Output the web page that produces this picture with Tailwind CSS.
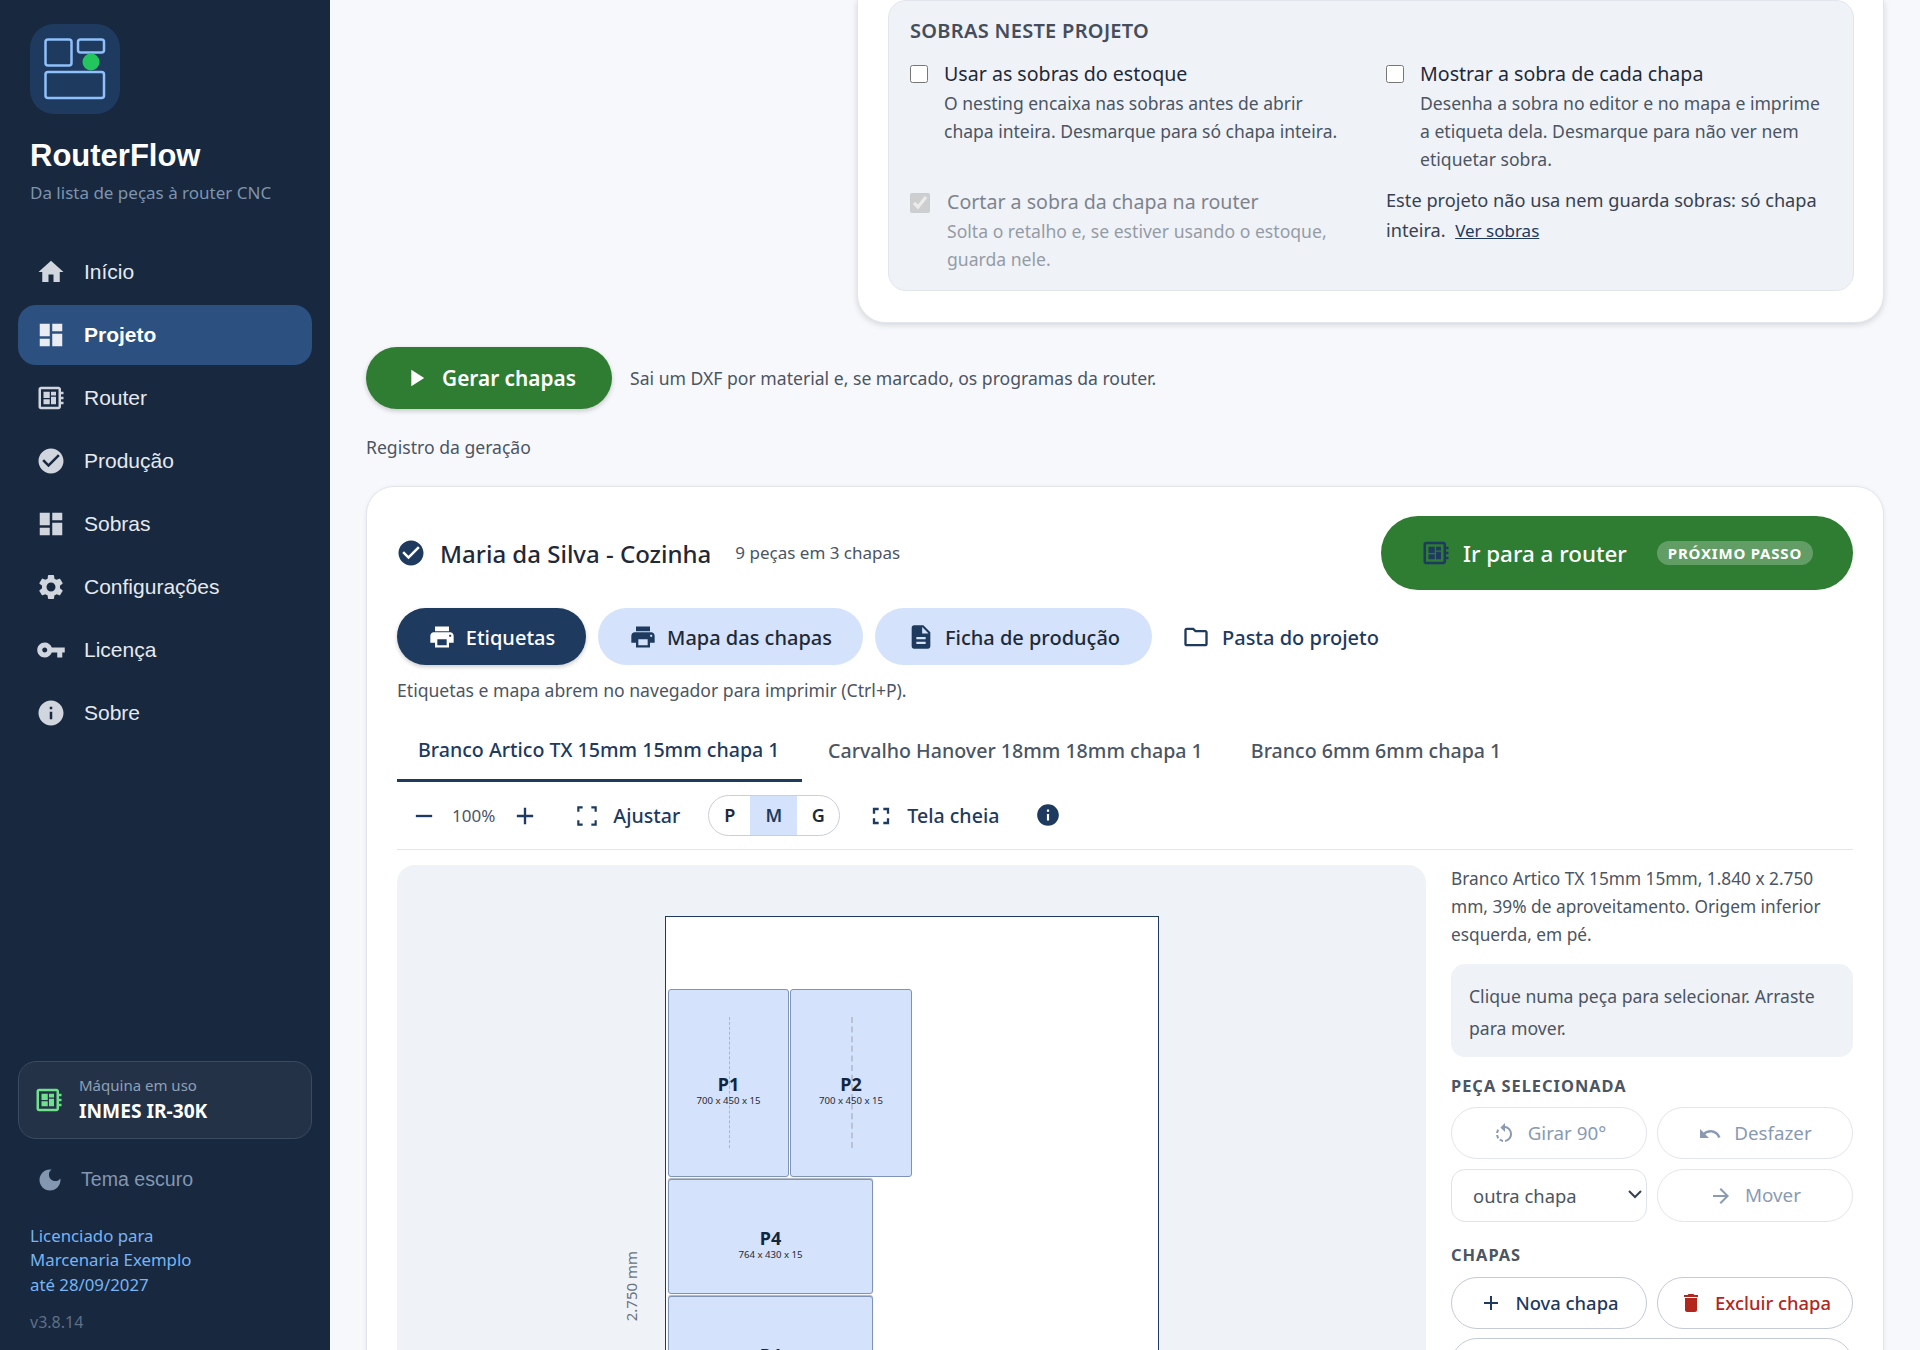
<!DOCTYPE html>
<html lang="pt-BR">
<head>
<meta charset="utf-8">
<title>RouterFlow</title>
<script src="https://cdn.jsdelivr.net/npm/@tailwindcss/browser@4"></script>
</head>
<body class="m-0 bg-[#f7f8fc]">
<div class="flex w-[1920px] h-[1350px] overflow-hidden font-['Noto_Sans',sans-serif] text-[#1f2937]">
  <aside class="w-[330px] shrink-0 h-full bg-[#17283f] flex flex-col">
    <div class="ml-[30px] mt-[24px] w-[90px] h-[90px] rounded-[24px] bg-[#1e3a5f] flex items-center justify-center">
      <svg width="62" height="62" viewBox="0 0 62 62" fill="none" stroke="#8fc0fa" stroke-width="2.5">
        <rect x="1.5" y="1.5" width="26" height="26" rx="2.5"/>
        <rect x="34" y="1.5" width="26" height="13" rx="2.5"/>
        <rect x="1.5" y="34" width="58.5" height="26" rx="2.5"/>
        <circle cx="47" cy="24" r="8.5" fill="#22c55e" stroke="none"/>
      </svg>
    </div>
    <div class="ml-[30px] mt-[24px] h-[36px] leading-[36px] text-[31px] font-bold font-['Liberation_Sans',sans-serif] text-white">RouterFlow</div>
    <div class="ml-[30px] mt-[7px] h-[24px] leading-[24px] text-[17px] text-[#7f93ad]">Da lista de peças à router CNC</div>
    <nav class="mt-[37px] mx-[18px] flex flex-col gap-[3px] font-['Liberation_Sans',sans-serif] text-[21px] text-[#e5e9f0]">
      <a class="h-[60px] flex items-center pl-[18px] gap-[18px]"><svg class="w-[30px] h-[30px]" viewBox="0 0 24 24" fill="#d1d5de"><path d="M10 20v-6h4v6h5v-8h3L12 3 2 12h3v8z"/></svg>Início</a>
      <a class="h-[60px] flex items-center pl-[18px] gap-[18px] rounded-[18px] bg-[#2c5080] font-bold text-white"><svg class="w-[30px] h-[30px]" viewBox="0 0 24 24" fill="#e9ecf2"><path d="M3 13h8V3H3v10zm0 8h8v-6H3v6zm10 0h8V11h-8v10zm0-18v6h8V3h-8z"/></svg>Projeto</a>
      <a class="h-[60px] flex items-center pl-[18px] gap-[18px]"><svg class="w-[30px] h-[30px]" viewBox="0 0 24 24" fill="#d1d5de"><path d="M22 9V7h-2V5c0-1.1-.9-2-2-2H4c-1.1 0-2 .9-2 2v14c0 1.1.9 2 2 2h14c1.1 0 2-.9 2-2v-2h2v-2h-2v-2h2v-2h-2V9h2zm-4 10H4V5h14v14zM6 13h5v4H6zm6-6h4v3h-4zM6 7h5v5H6zm6 4h4v6h-4z"/></svg>Router</a>
      <a class="h-[60px] flex items-center pl-[18px] gap-[18px]"><svg class="w-[30px] h-[30px]" viewBox="0 0 24 24" fill="#d1d5de"><path d="M12 2C6.48 2 2 6.48 2 12s4.48 10 10 10 10-4.48 10-10S17.52 2 12 2zm-2 15l-5-5 1.41-1.41L10 14.17l7.59-7.59L19 8l-9 9z"/></svg>Produção</a>
      <a class="h-[60px] flex items-center pl-[18px] gap-[18px]"><svg class="w-[30px] h-[30px]" viewBox="0 0 24 24" fill="#d1d5de"><path d="M3 13h8V3H3v10zm0 8h8v-6H3v6zm10 0h8V11h-8v10zm0-18v6h8V3h-8z"/></svg>Sobras</a>
      <a class="h-[60px] flex items-center pl-[18px] gap-[18px]"><svg class="w-[30px] h-[30px]" viewBox="0 0 24 24" fill="#d1d5de"><path d="M19.14 12.94c.04-.3.06-.61.06-.94 0-.32-.02-.64-.07-.94l2.03-1.58c.18-.14.23-.41.12-.61l-1.92-3.32c-.12-.22-.37-.29-.59-.22l-2.39.96c-.5-.38-1.03-.7-1.62-.94l-.36-2.54c-.04-.24-.24-.41-.48-.41h-3.84c-.24 0-.43.17-.47.41l-.36 2.54c-.59.24-1.13.57-1.62.94l-2.39-.96c-.22-.08-.47 0-.59.22L2.74 8.87c-.12.21-.08.47.12.61l2.03 1.58c-.05.3-.09.63-.09.94s.02.64.07.94l-2.03 1.58c-.18.14-.23.41-.12.61l1.92 3.32c.12.22.37.29.59.22l2.39-.96c.5.38 1.03.7 1.62.94l.36 2.54c.05.24.24.41.48.41h3.84c.24 0 .44-.17.47-.41l.36-2.54c.59-.24 1.13-.56 1.62-.94l2.39.96c.22.08.47 0 .59-.22l1.92-3.32c.12-.22.07-.47-.12-.61l-2.01-1.58zM12 15.6c-1.98 0-3.6-1.62-3.6-3.6s1.62-3.6 3.6-3.6 3.6 1.62 3.6 3.6-1.62 3.6-3.6 3.6z"/></svg>Configurações</a>
      <a class="h-[60px] flex items-center pl-[18px] gap-[18px]"><svg class="w-[30px] h-[30px]" viewBox="0 0 24 24" fill="#d1d5de"><path d="M12.65 10C11.83 7.67 9.61 6 7 6c-3.31 0-6 2.69-6 6s2.69 6 6 6c2.61 0 4.83-1.67 5.65-4H17v4h4v-4h2v-4H12.65zM7 14c-1.1 0-2-.9-2-2s.9-2 2-2 2 .9 2 2-.9 2-2 2z"/></svg>Licença</a>
      <a class="h-[60px] flex items-center pl-[18px] gap-[18px]"><svg class="w-[30px] h-[30px]" viewBox="0 0 24 24" fill="#d1d5de"><path d="M12 2C6.48 2 2 6.48 2 12s4.48 10 10 10 10-4.48 10-10S17.52 2 12 2zm1 15h-2v-6h2v6zm0-8h-2V7h2v2z"/></svg>Sobre</a>
    </nav>
    <div class="mt-auto mx-[18px] h-[78px] rounded-[18px] border border-[#3a4a60] bg-[#233247] flex items-center pl-[15px] gap-[15px]">
      <svg class="w-[30px] h-[30px]" viewBox="0 0 24 24" fill="#6ee18a"><path d="M22 9V7h-2V5c0-1.1-.9-2-2-2H4c-1.1 0-2 .9-2 2v14c0 1.1.9 2 2 2h14c1.1 0 2-.9 2-2v-2h2v-2h-2v-2h2v-2h-2V9h2zm-4 10H4V5h14v14zM6 13h5v4H6zm6-6h4v3h-4zM6 7h5v5H6zm6 4h4v6h-4z"/></svg>
      <div class="flex flex-col">
        <span class="text-[15px] leading-[21px] text-[#8fa0b6]">Máquina em uso</span>
        <span class="text-[19.2px] leading-[29px] font-bold text-white">INMES IR-30K</span>
      </div>
    </div>
    <div class="mt-[17px] h-[48px] flex items-center pl-[36px] gap-[17px] font-['Liberation_Sans',sans-serif] text-[19.6px] text-[#8497b0]">
      <svg class="w-[28px] h-[28px]" viewBox="0 0 24 24" fill="#8497b0"><path d="M12 3c-4.97 0-9 4.03-9 9s4.03 9 9 9 9-4.03 9-9c0-.46-.04-.92-.1-1.36-.98 1.37-2.58 2.26-4.4 2.26-2.98 0-5.4-2.42-5.4-5.4 0-1.81.89-3.42 2.26-4.4-.44-.06-.9-.1-1.36-.1z"/></svg>Tema escuro
    </div>
    <div class="mt-[20px] ml-[30px] text-[16.8px] leading-[24.5px] text-[#78b4f3]">Licenciado para<br>Marcenaria Exemplo<br>até 28/09/2027</div>
    <div class="mt-[13px] mb-[16px] ml-[30px] text-[16px] leading-[24px] text-[#5f6f85]">v3.8.14</div>
  </aside>

  <main class="flex-1 h-full overflow-hidden pl-[36px] pr-[36px]">
    <div class="flex justify-end">
      <section class="w-[1027px] h-[323px] bg-white rounded-b-[28px] border border-t-0 border-[#e2e5ec] shadow-[0_2px_6px_rgba(0,0,0,0.14)] pl-[30px] pr-[29px]">
        <div class="h-[291px] rounded-[18px] bg-[#eff2f7] border border-[#e2e5ec] grid grid-cols-[476px_1fr] content-start pl-[21px] pr-[20px]">
          <div class="col-span-2 pt-[17px] h-[52px] text-[20px] leading-[26px] font-semibold text-[#454d5b] tracking-[0.3px]">SOBRAS NESTE PROJETO</div>
          <div class="flex items-start gap-[16px] h-[126px]">
            <input type="checkbox" class="mt-[12px] w-[18px] h-[18px] shrink-0">
            <div class="pt-[7px]">
              <div class="text-[19.6px] leading-[28px] text-[#1f2937]">Usar as sobras do estoque</div>
              <p class="mt-[1px] text-[17.5px] leading-[28px] text-[#4b5563]">O nesting encaixa nas sobras antes de abrir<br>chapa inteira. Desmarque para só chapa inteira.</p>
            </div>
          </div>
          <div class="flex items-start gap-[16px]">
            <input type="checkbox" class="mt-[12px] w-[18px] h-[18px] shrink-0">
            <div class="pt-[7px]">
              <div class="text-[19.6px] leading-[28px] text-[#1f2937]">Mostrar a sobra de cada chapa</div>
              <p class="mt-[1px] text-[17.6px] leading-[28px] text-[#4b5563]">Desenha a sobra no editor e no mapa e imprime<br>a etiqueta dela. Desmarque para não ver nem<br>etiquetar sobra.</p>
            </div>
          </div>
          <div class="flex items-start gap-[17px] pr-[10px]">
            <input type="checkbox" checked disabled class="mt-[14px] w-[20px] h-[20px] shrink-0">
            <div class="pt-[9px] opacity-55">
              <div class="text-[19.6px] leading-[28px] text-[#1f2937]">Cortar a sobra da chapa na router</div>
              <p class="mt-[1px] text-[17.6px] leading-[28px] text-[#4b5563]">Solta o retalho e, se estiver usando o estoque,<br>guarda nele.</p>
            </div>
          </div>
          <p class="pt-[6px] text-[18.2px] leading-[30px] text-[#374151]">Este projeto não usa nem guarda sobras: só chapa<br>inteira. &nbsp;<a class="text-[17px] text-[#1e3a5f] underline">Ver sobras</a></p>
        </div>
      </section>
    </div>

    <div class="mt-[24px] flex items-center gap-[18px]">
      <button class="w-[246px] h-[62px] rounded-full bg-[#2e7d32] text-white text-[20.8px] font-semibold flex items-center justify-center gap-[12px] shadow-[0_2px_5px_rgba(0,0,0,0.2)]">
        <svg class="w-[28px] h-[28px]" viewBox="0 0 24 24" fill="#fff"><path d="M8 5v14l11-7z"/></svg><span class="mt-[2px]">Gerar chapas</span>
      </button>
      <span class="text-[17.6px] text-[#4b5563]">Sai um DXF por material e, se marcado, os programas da router.</span>
    </div>
    <div class="mt-[25px] h-[27px] leading-[27px] text-[17.6px] text-[#4b5563]">Registro da geração</div>

    <section class="mt-[25px] h-[1000px] bg-white rounded-[28px] border border-[#e2e5ec] shadow-[0_1px_4px_rgba(0,0,0,0.08)] pt-[29px] px-[30px]">
      <div class="flex items-center justify-between h-[74px]">
        <div class="flex items-center">
          <svg class="w-[30px] h-[30px] ml-[-1px]" viewBox="0 0 24 24" fill="#1e3a5f"><path d="M12 2C6.48 2 2 6.48 2 12s4.48 10 10 10 10-4.48 10-10S17.52 2 12 2zm-2 15l-5-5 1.41-1.41L10 14.17l7.59-7.59L19 8l-9 9z"/></svg>
          <h2 class="ml-[14px] mt-[2px] text-[24px] font-medium text-[#1f2937]">Maria da Silva - Cozinha</h2>
          <span class="ml-[24px] text-[17px] text-[#4b5563]">9 peças em 3 chapas</span>
        </div>
        <button class="w-[472px] h-[74px] rounded-full bg-[#2e7d32] text-white flex items-center pl-[40px]">
          <svg class="w-[30px] h-[30px]" viewBox="0 0 24 24" fill="#1e3a5f"><path d="M22 9V7h-2V5c0-1.1-.9-2-2-2H4c-1.1 0-2 .9-2 2v14c0 1.1.9 2 2 2h14c1.1 0 2-.9 2-2v-2h2v-2h-2v-2h2v-2h-2V9h2zm-4 10H4V5h14v14zM6 13h5v4H6zm6-6h4v3h-4zM6 7h5v5H6zm6 4h4v6h-4z"/></svg>
          <span class="ml-[12px] mt-[2px] text-[22.4px] font-medium">Ir para a router</span>
          <span class="ml-[30px] h-[24px] px-[11px] rounded-full bg-white/25 text-[15px] leading-[24px] font-bold tracking-[0.8px]">PRÓXIMO PASSO</span>
        </button>
      </div>
      <div class="mt-[18px] flex items-center h-[57px] text-[20px] font-medium">
        <button class="w-[189px] h-[57px] rounded-full bg-[#1e3a5f] text-white flex items-center justify-center gap-[10px] shadow-[0_2px_4px_rgba(0,0,0,0.2)]"><svg class="w-[28px] h-[28px]" viewBox="0 0 24 24" fill="#fff"><path d="M19 8H5c-1.66 0-3 1.34-3 3v6h4v4h12v-4h4v-6c0-1.66-1.34-3-3-3zm-3 11H8v-5h8v5zm3-7c-.55 0-1-.45-1-1s.45-1 1-1 1 .45 1 1-.45 1-1 1zm-1-9H6v4h12V3z"/></svg><span class="mt-[2px]">Etiquetas</span></button>
        <button class="ml-[12px] w-[265px] h-[57px] rounded-full bg-[#d4e3fb] text-[#1f2937] flex items-center justify-center gap-[10px]"><svg class="w-[28px] h-[28px]" viewBox="0 0 24 24" fill="#1e3a5f"><path d="M19 8H5c-1.66 0-3 1.34-3 3v6h4v4h12v-4h4v-6c0-1.66-1.34-3-3-3zm-3 11H8v-5h8v5zm3-7c-.55 0-1-.45-1-1s.45-1 1-1 1 .45 1 1-.45 1-1 1zm-1-9H6v4h12V3z"/></svg><span class="mt-[2px]">Mapa das chapas</span></button>
        <button class="ml-[12px] w-[277px] h-[57px] rounded-full bg-[#d4e3fb] text-[#1f2937] flex items-center justify-center gap-[10px]"><svg class="w-[28px] h-[28px]" viewBox="0 0 24 24" fill="#1e3a5f"><path d="M14 2H6c-1.1 0-1.99.9-1.99 2L4 20c0 1.1.89 2 1.99 2H18c1.1 0 2-.9 2-2V8l-6-6zm2 16H8v-2h8v2zm0-4H8v-2h8v2zm-3-5V3.5L18.5 9H13z"/></svg><span class="mt-[2px]">Ficha de produção</span></button>
        <button class="ml-[30px] h-[57px] text-[#1e3a5f] flex items-center gap-[12px]"><svg class="w-[28px] h-[28px]" viewBox="0 0 24 24" fill="#1e3a5f"><path d="M9.17 6l2 2H20v10H4V6h5.17M10 4H4c-1.1 0-1.99.9-1.99 2L2 18c0 1.1.9 2 2 2h16c1.1 0 2-.9 2-2V8c0-1.1-.9-2-2-2h-8l-2-2z"/></svg><span class="mt-[2px]">Pasta do projeto</span></button>
      </div>
      <p class="mt-[12px] h-[27px] leading-[27px] text-[17.6px] text-[#4b5563]">Etiquetas e mapa abrem no navegador para imprimir (Ctrl+P).</p>

      <div class="mt-[14px] h-[64px] flex text-[19.6px] font-medium text-[#4b5563]">
        <div class="w-[405px] h-[64px] flex items-center pl-[21px] pt-[3px] border-b-[3px] border-[#1e3a5f] text-[#1e3a5f]">Branco Artico TX 15mm 15mm chapa 1</div>
        <div class="ml-[26px] h-[64px] flex items-center pt-[1px]">Carvalho Hanover 18mm 18mm chapa 1</div>
        <div class="ml-[48px] h-[64px] flex items-center pt-[1px]">Branco 6mm 6mm chapa 1</div>
      </div>

      <div class="h-[68px] flex items-center border-b border-[#e2e5ec] text-[#1e3a5f] text-[19.6px] font-medium">
        <svg class="ml-[13px] w-[28px] h-[28px]" viewBox="0 0 24 24" fill="#1e3a5f"><path d="M19 13H5v-2h14v2z"/></svg>
        <span class="ml-[14px] text-[17px] font-normal text-[#4b5563]">100%</span>
        <svg class="ml-[16px] w-[28px] h-[28px]" viewBox="0 0 24 24" fill="#1e3a5f"><path d="M19 13h-6v6h-2v-6H5v-2h6V5h2v6h6v2z"/></svg>
        <svg class="ml-[35px] w-[26px] h-[26px]" viewBox="0 0 24 24" fill="#1e3a5f"><path d="M3 8V3h5v2H5v3H3zM16 3h5v5h-2V5h-3V3zM3 16h2v3h3v2H3v-5zM19 16h2v5h-5v-2h3v-3z"/></svg>
        <span class="ml-[13px]">Ajustar</span>
        <div class="ml-[28px] w-[132px] h-[41px] rounded-full border border-[#c9ced8] overflow-hidden grid grid-cols-[41px_47px_1fr] text-[18px] font-semibold text-[#1f2937]">
          <span class="flex items-center justify-center">P</span>
          <span class="flex items-center justify-center bg-[#d4e3fb] text-[#1e3a5f]">M</span>
          <span class="flex items-center justify-center">G</span>
        </div>
        <svg class="ml-[27px] w-[28px] h-[28px]" viewBox="0 0 24 24" fill="#1e3a5f"><path d="M7 14H5v5h5v-2H7v-3zm-2-4h2V7h3V5H5v5zm12 7h-3v2h5v-5h-2v3zM14 5v2h3v3h2V5h-5z"/></svg>
        <span class="ml-[12px]">Tela cheia</span>
        <svg class="ml-[36px] w-[26px] h-[26px] -mt-[2px]" viewBox="0 0 24 24" fill="#1e3a5f"><path d="M12 2C6.48 2 2 6.48 2 12s4.48 10 10 10 10-4.48 10-10S17.52 2 12 2zm1 15h-2v-6h2v6zm0-8h-2V7h2v2z"/></svg>
      </div>

      <div class="mt-[15px] flex gap-[25px] items-start">
        <div class="relative w-[1029px] h-[800px] rounded-[18px] bg-[#eff2f7] shrink-0">
          <div class="absolute left-[268px] top-[51px] w-[494px] h-[700px] bg-white border border-[#1e3a5f]">
            <div class="absolute left-[2px] top-[72px] w-[121px] h-[188px] rounded-[3px] bg-[#d4e3fb] border border-[#7f93b5] pt-[16px] flex flex-col items-center justify-center">
              <span class="absolute top-[27px] bottom-[28px] left-1/2 border-l border-dashed border-[#aab4c8]"></span>
              <span class="relative text-[18px] leading-[20px] font-bold text-[#14263f]">P1</span>
              <span class="relative text-[9.6px] leading-[14px] text-[#1f2937]">700 x 450 x 15</span>
            </div>
            <div class="absolute left-[124px] top-[72px] w-[122px] h-[188px] rounded-[3px] bg-[#d4e3fb] border border-[#7f93b5] pt-[16px] flex flex-col items-center justify-center">
              <span class="absolute top-[27px] bottom-[28px] left-1/2 border-l-2 border-dashed border-[#b9c2d4]"></span>
              <span class="relative text-[18px] leading-[20px] font-bold text-[#14263f]">P2</span>
              <span class="relative text-[9.6px] leading-[14px] text-[#1f2937]">700 x 450 x 15</span>
            </div>
            <div class="absolute left-[2px] top-[262px] w-[205px] h-[115px] rounded-[3px] bg-[#d4e3fb] border border-[#7f93b5] shadow-[0_-1px_1px_rgba(90,105,130,0.5)] pt-[16px] flex flex-col items-center justify-center">
              <span class="text-[18px] leading-[20px] font-bold text-[#14263f]">P4</span>
              <span class="text-[9.6px] leading-[14px] text-[#1f2937]">764 x 430 x 15</span>
            </div>
            <div class="absolute left-[2px] top-[379px] w-[205px] h-[115px] rounded-[3px] bg-[#d4e3fb] border border-[#7f93b5] shadow-[0_-1px_1px_rgba(90,105,130,0.5)] pt-[16px] flex flex-col items-center justify-center">
              <span class="text-[18px] leading-[20px] font-bold text-[#14263f]">P4</span>
              <span class="text-[9.6px] leading-[14px] text-[#1f2937]">764 x 430 x 15</span>
            </div>
          </div>
          <span class="absolute left-[224px] top-[386px] leading-[20px] whitespace-nowrap [writing-mode:vertical-rl] rotate-180 text-[15px] text-[#6b7280]">2.750 mm</span>
        </div>
        <div class="w-[402px] shrink-0">
          <p class="text-[17.3px] leading-[28px] text-[#4b5563]">Branco Artico TX 15mm 15mm, 1.840 x 2.750<br>mm, 39% de aproveitamento. Origem inferior<br>esquerda, em pé.</p>
          <div class="mt-[15px] h-[93px] rounded-[14px] bg-[#eff2f7] px-[18px] pt-[16px] text-[17.6px] leading-[32px] text-[#4b5563]">Clique numa peça para selecionar. Arraste para mover.</div>
          <div class="mt-[18px] h-[22px] leading-[22px] text-[16.4px] font-bold tracking-[1px] text-[#4b5563]">PEÇA SELECIONADA</div>
          <div class="mt-[10px] grid grid-cols-2 gap-x-[10px] gap-y-[10px] text-[18.8px]">
            <button class="h-[52px] rounded-full border border-[#e2e5ec] text-[#8a9ab3] flex items-center justify-center gap-[12px] pt-[1px]"><svg class="w-[24px] h-[24px]" viewBox="0 0 24 24" fill="#8a9ab3"><path d="M7.11 8.53L5.7 7.11C4.8 8.27 4.24 9.61 4.07 11h2.02c.14-.87.49-1.72 1.02-2.47zM6.09 13H4.07c.17 1.39.72 2.73 1.62 3.89l1.41-1.42c-.52-.75-.87-1.59-1.01-2.47zm1.01 5.32c1.16.9 2.51 1.44 3.9 1.61V17.9c-.87-.15-1.71-.49-2.46-1.03L7.1 18.32zM13 4.07V1L8.45 5.55 13 10V6.09c2.84.48 5 2.94 5 5.91s-2.16 5.43-5 5.91v2.02c3.95-.49 7-3.85 7-7.93s-3.05-7.44-7-7.93z"/></svg>Girar 90°</button>
            <button class="h-[52px] rounded-full border border-[#e2e5ec] text-[#8a9ab3] flex items-center justify-center gap-[12px] pt-[1px]"><svg class="w-[24px] h-[24px]" viewBox="0 0 24 24" fill="#8a9ab3"><path d="M12.5 8c-2.65 0-5.05.99-6.9 2.6L2 7v9h9l-3.62-3.62c1.39-1.16 3.16-1.88 5.12-1.88 3.54 0 6.55 2.31 7.6 5.5l2.37-.78C21.08 11.03 17.15 8 12.5 8z"/></svg>Desfazer</button>
            <div class="relative h-[53px]">
              <select class="appearance-none w-full h-[53px] rounded-[14px] border border-[#dfe3ea] bg-white pl-[21px] pt-[1px] text-[18.4px] text-[#4b5563] font-['Noto_Sans',sans-serif]"><option>outra chapa</option></select>
              <svg class="absolute right-[4px] top-[19px] w-[16px] h-[12px] pointer-events-none" viewBox="0 0 16 12" fill="none" stroke="#374151" stroke-width="2"><path d="M2 3l6 6 6-6"/></svg>
            </div>
            <button class="h-[53px] rounded-full border border-[#e2e5ec] text-[#8a9ab3] flex items-center justify-center gap-[12px]"><svg class="w-[24px] h-[24px]" viewBox="0 0 24 24" fill="#8a9ab3"><path d="M12 4l-1.41 1.41L16.17 11H4v2h12.17l-5.58 5.59L12 20l8-8z"/></svg>Mover</button>
          </div>
          <div class="mt-[22px] h-[22px] leading-[22px] text-[16.4px] font-bold tracking-[1px] text-[#4b5563]">CHAPAS</div>
          <div class="mt-[11px] grid grid-cols-2 gap-x-[10px] gap-y-[9px] text-[18.4px] font-medium">
            <button class="h-[52px] rounded-full border border-[#c4cad6] text-[#1e3a5f] flex items-center justify-center gap-[12px]"><svg class="w-[24px] h-[24px]" viewBox="0 0 24 24" fill="#1e3a5f"><path d="M19 13h-6v6h-2v-6H5v-2h6V5h2v6h6v2z"/></svg>Nova chapa</button>
            <button class="h-[52px] rounded-full border border-[#c4cad6] text-[#b3261e] flex items-center justify-center gap-[12px]"><svg class="w-[24px] h-[24px]" viewBox="0 0 24 24" fill="#b3261e"><path d="M6 19c0 1.1.9 2 2 2h8c1.1 0 2-.9 2-2V7H6v12zM19 4h-3.5l-1-1h-5l-1 1H5v2h14V4z"/></svg>Excluir chapa</button>
            <div class="col-span-2 h-[52px] rounded-full border border-[#c4cad6]"></div>
          </div>
        </div>
      </div>
    </section>
  </main>
</div>
</body>
</html>
